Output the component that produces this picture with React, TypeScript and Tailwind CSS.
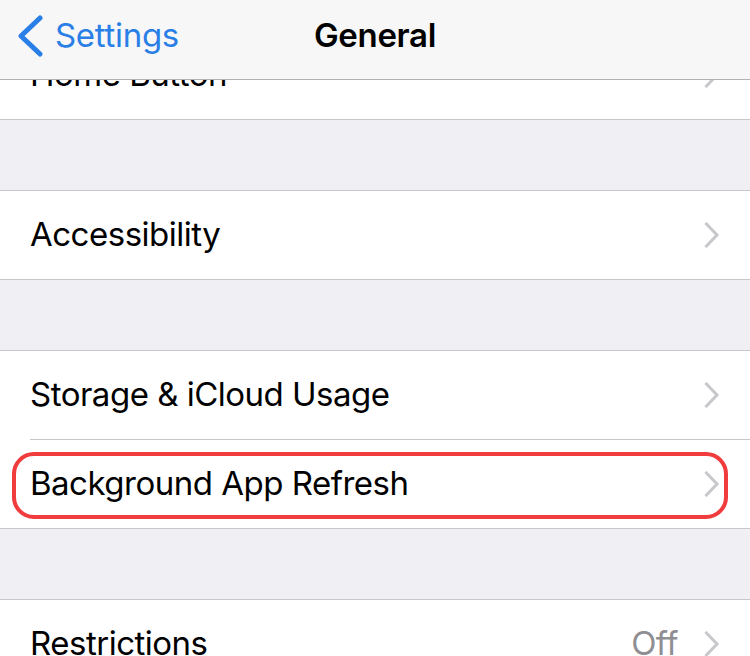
import React from "react";

const Chevron = () => (
  <svg width="16" height="26" viewBox="0 0 16 26" className="shrink-0">
    <path d="M2.5 2 L13 13 L2.5 24" fill="none" stroke="#c7c7cc" strokeWidth="3" strokeLinecap="square" />
  </svg>
);

const Row = ({
  label,
  value,
  border = "full",
}: {
  label: string;
  value?: string;
  border?: "full" | "inset";
}) => (
  <div className="bg-white">
    <div className="h-[88px] flex items-center pl-[30px] pr-[30px]">
      <span className="flex-1 text-[33px] text-black tracking-[-0.5px]">{label}</span>
      {value && <span className="text-[33px] text-[#8e8e93] mr-[26px] tracking-[-0.5px]">{value}</span>}
      <Chevron />
    </div>
    {border === "full" ? (
      <div className="h-px bg-[#c8c7cc]" />
    ) : (
      <div className="h-px bg-white pl-[30px]">
        <div className="h-px bg-[#c8c7cc]" />
      </div>
    )}
  </div>
);

const Gap = () => (
  <div className="h-[71px] bg-[#efeff4] border-b border-[#c8c7cc]" />
);

export default function App() {
  return (
    <div
      className="w-[750px] h-[656px] overflow-hidden bg-[#efeff4] flex flex-col"
      style={{ fontFamily: "Inter, 'Noto Sans', 'Liberation Sans', sans-serif" }}
    >
      <div className="h-[80px] shrink-0 bg-[#f7f7f8] border-b border-[#b2b2b2] relative z-10 flex items-center pb-[8px]">
        <div className="flex items-center pl-[16px] w-[250px] text-[#2a7fe6]">
          <svg width="28" height="42" viewBox="0 0 28 42">
            <path d="M24 3 L5 21 L24 39" fill="none" stroke="#2a7fe6" strokeWidth="5" strokeLinecap="round" strokeLinejoin="round" />
          </svg>
          <span className="ml-[11px] text-[33px] tracking-[-0.3px]">Settings</span>
        </div>
        <div className="flex-1 text-center text-[33px] font-semibold text-black tracking-[-0.3px]">General</div>
        <div className="w-[250px]" />
      </div>

      <div className="flex-1 overflow-hidden">
        <div className="-mt-[49px]">
          <Row label="Home Button" />
          <Gap />
          <Row label="Accessibility" />
          <Gap />
          <Row label="Storage & iCloud Usage" border="inset" />
          <div className="relative">
            <Row label="Background App Refresh" />
            <div className="absolute left-[12px] right-[22px] top-[12px] h-[67px] border-[4px] border-[#f03c3c] rounded-[22px]" />
          </div>
          <Gap />
          <Row label="Restrictions" value="Off" />
        </div>
      </div>
    </div>
  );
}
